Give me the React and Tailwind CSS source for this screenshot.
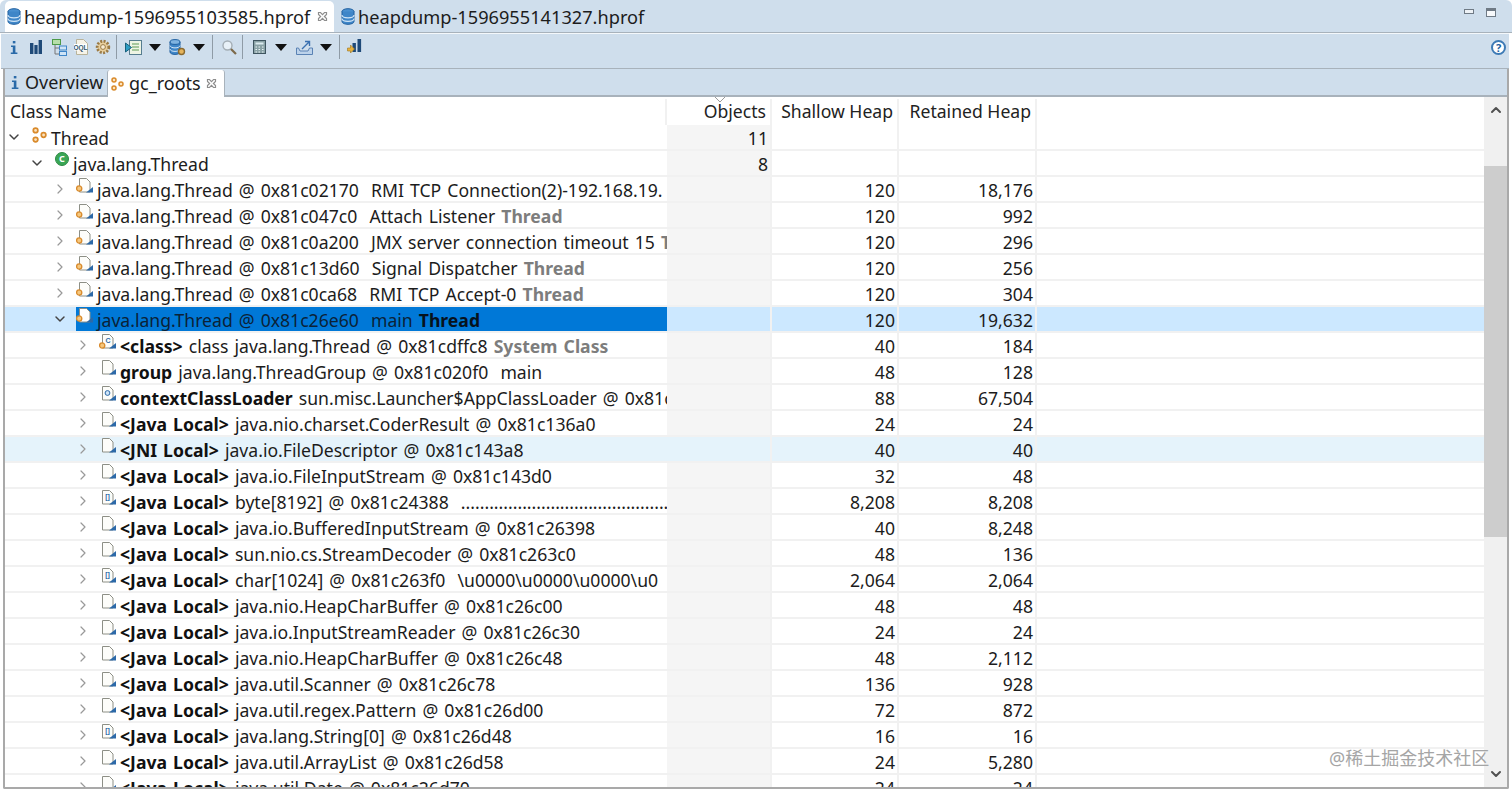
import { ChevronRight, ChevronDown, ChevronUp } from "lucide-react";

const DbIcon = () => (
  <svg width="14" height="17" viewBox="0 0 14 17" className="shrink-0">
    <ellipse cx="7" cy="3.5" rx="6" ry="2.8" fill="#4a90d0" stroke="#1f5f9f" />
    <path d="M1 3.5v10c0 1.6 2.7 2.8 6 2.8s6-1.2 6-2.8v-10" fill="#3f86c8" stroke="#1f5f9f" />
    <path d="M1 7c0 1.6 2.7 2.8 6 2.8s6-1.2 6-2.8M1 10.5c0 1.6 2.7 2.8 6 2.8s6-1.2 6-2.8" fill="none" stroke="#cfe4f6" strokeWidth="1.2" />
  </svg>
);

const InfoIcon = () => (
  <svg width="8" height="15" viewBox="0 0 8 14" className="shrink-0">
    <rect x="2.8" y="0.5" width="2.6" height="2.4" fill="#2a6aa8" />
    <path d="M1 5h4.4v7H7.4v1.5H.8V12h2V6.4H1z" fill="#2a6aa8" />
  </svg>
);

const RootsIcon = ({ size = 14 }) => (
  <svg width={size} height={size} viewBox="0 0 14 14" className="shrink-0" fill="#fbe3c0" stroke="#d98a2b" strokeWidth="1.5">
    <circle cx="4" cy="3" r="2" />
    <circle cx="11" cy="7" r="2" />
    <circle cx="4" cy="11" r="2" />
  </svg>
);

const CloseX = () => (
  <svg width="11" height="11" viewBox="0 0 11 11" className="shrink-0" fill="none" stroke="#8d8d8d" strokeWidth="1.2">
    <path d="M1.5 1.5h2L5.5 3.6 7.5 1.5h2v2L7.4 5.5l2.1 2v2h-2L5.5 7.4l-2 2.1h-2v-2l2.1-2-2.1-2z" />
  </svg>
);

const Sep = () => <div className="w-px h-[24px] bg-[#8f9ba6] mr-[5px] shrink-0" />;

const Caret = () => (
  <svg width="12" height="7" viewBox="0 0 12 7" className="shrink-0 mx-[7px]">
    <path d="M0 0h12L6 7z" fill="#111" />
  </svg>
);

const BarsIcon = () => (
  <svg width="12" height="14" viewBox="0 0 12 14" className="shrink-0">
    <rect x="0" y="3" width="3.4" height="11" fill="#1f4a78" />
    <rect x="4.4" y="5" width="3.2" height="9" fill="#1f4a78" />
    <rect x="8.6" y="0" width="3.4" height="14" fill="#1f4a78" />
  </svg>
);

const TreeIcon = () => (
  <svg width="15" height="17" viewBox="0 0 15 17" className="shrink-0" fill="none">
    <rect x="0.5" y="0.5" width="8" height="5" fill="#b7dfa9" stroke="#4d9a48" />
    <rect x="7.5" y="7" width="7" height="4" fill="#cfe4f6" stroke="#3f86c8" />
    <rect x="7.5" y="12.5" width="7" height="4" fill="#cfe4f6" stroke="#3f86c8" />
    <path d="M3 6v9h4M3 9h4" stroke="#777" />
  </svg>
);

const OqlIcon = () => (
  <svg width="14" height="16" viewBox="0 0 14 16" className="shrink-0">
    <path d="M2.5.5h7l4 4v11h-11z" fill="#f6f3e8" stroke="#b9b39a" />
    <rect x="0" y="5" width="13" height="6.5" fill="#fff" />
    <text x="6.5" y="10.8" textAnchor="middle" fontSize="6.5" fontWeight="700" fill="#33566f" fontFamily="Liberation Sans, sans-serif">OQL</text>
  </svg>
);

const GearIcon = () => (
  <svg width="16" height="16" viewBox="0 0 16 16" className="shrink-0">
    <circle cx="8" cy="8" r="5.8" fill="#e8cf9d" stroke="#9a7a45" strokeWidth="2.8" strokeDasharray="2 1.4" />
    <circle cx="8" cy="8" r="2.4" fill="#f7ecd2" stroke="#9a7a45" />
  </svg>
);

const ReportIcon = () => (
  <svg width="17" height="15" viewBox="0 0 17 15" className="shrink-0">
    <rect x="4.5" y="0.5" width="12" height="14" fill="#eef4e4" stroke="#567d8f" />
    <path d="M7 4h7M7 7h7M7 10h7" stroke="#5f9a56" />
    <path d="M0.5 3l6 4.5-6 4.5z" fill="#2c9dc4" stroke="#17607c" />
  </svg>
);

const DbGearIcon = () => (
  <svg width="17" height="17" viewBox="0 0 17 17" className="shrink-0">
    <path d="M1 3v10c0 1.4 2.2 2.4 5 2.4s5-1 5-2.4V3z" fill="#3f86c8" stroke="#1f5f9f" />
    <ellipse cx="6" cy="3" rx="5" ry="2.4" fill="#7fb3e0" stroke="#1f5f9f" />
    <path d="M1 6.5c0 1.4 2.2 2.4 5 2.4s5-1 5-2.4M1 10c0 1.4 2.2 2.4 5 2.4s5-1 5-2.4" fill="none" stroke="#d5e7f6" />
    <circle cx="12.5" cy="12.5" r="3" fill="#e6b45c" stroke="#8a6a30" strokeWidth="1.4" />
  </svg>
);

const SearchIcon = () => (
  <svg width="15" height="15" viewBox="0 0 15 15" className="shrink-0">
    <circle cx="5.5" cy="5.5" r="4.5" fill="#e8f1f8" stroke="#a4aeb5" strokeWidth="1.4" />
    <path d="M9 9l5 5" stroke="#7d6a4a" strokeWidth="2.2" />
  </svg>
);

const CalcIcon = () => (
  <svg width="13" height="14" viewBox="0 0 13 14" className="shrink-0">
    <rect x="0.5" y="0.5" width="12" height="13" fill="#8aa2a6" stroke="#3f5560" />
    <rect x="2.5" y="2.5" width="8" height="2" fill="#dcebf0" />
    <path d="M2.5 7h1.5M5.5 7H7M9 7h1.5M2.5 9.5h1.5M5.5 9.5H7M9 9.5h1.5M2.5 12h1.5M5.5 12H7M9 12h1.5" stroke="#e9f3f6" />
  </svg>
);

const ExportIcon = () => (
  <svg width="17" height="15" viewBox="0 0 17 15" className="shrink-0" fill="none">
    <path d="M.5 8v6.5h16V8h-3l-1.5 3H4L2.5 8z" fill="#bcd2ea" stroke="#5a82b4" />
    <path d="M6 9l7-7M9 1.5h4.5V6" stroke="#3a70b0" strokeWidth="1.4" />
  </svg>
);

const CompareIcon = () => (
  <svg width="15" height="16" viewBox="0 0 15 16" className="shrink-0">
    <rect x="5.5" y="4" width="3.4" height="9" fill="#1f4a78" />
    <rect x="10.5" y="0" width="3.6" height="13" fill="#1f4a78" />
    <path d="M0.5 9h3V6l4 4-4 4v-2h-3z" fill="#e8b23e" stroke="#9a7420" strokeWidth=".6" />
  </svg>
);

// the small object icons in front of each tree row
const ObjIcon = ({ kind, selected }) => (
  <svg width="18" height="17" viewBox="0 0 18 17" className="shrink-0 -mt-[6px]">
    <path d="M3.5 .5h7l3.5 3.5v10H3.5z" fill={selected ? "#fff" : "#fdfdfa"} stroke="#8d8f86" />
    <path d="M10 14.5h7V9z" fill="#2c69a8" />
    {kind === "gc" && <circle cx="3.2" cy="10.5" r="2.6" fill="#f5c77e" stroke="#d98a2b" strokeWidth="1.3" />}
    {kind === "class" && <circle cx="3.2" cy="11.5" r="2.6" fill="#f5c77e" stroke="#d98a2b" strokeWidth="1.3" />}
    {kind === "class" && <text x="9" y="9" textAnchor="middle" fontSize="7" fontWeight="700" fill="#2c69a8" fontFamily="Liberation Sans, sans-serif">C</text>}
    {kind === "loader" && <circle cx="8.5" cy="7" r="2.4" fill="#cfe4f6" stroke="#2c69a8" />}
    {kind === "array" && <text x="8.5" y="9" textAnchor="middle" fontSize="7" fontWeight="700" fill="#2c69a8" fontFamily="Liberation Sans, sans-serif">[]</text>}
  </svg>
);

const rows = [
  { level: 0, open: true, root: true, name: "Thread", objects: "11" },
  { level: 1, open: true, cls: true, name: "java.lang.Thread", objects: "8" },
  { level: 2, icon: "gc", name: "java.lang.Thread @ 0x81c02170  RMI TCP Connection(2)-192.168.19.", shallow: "120", retained: "18,176" },
  { level: 2, icon: "gc", name: "java.lang.Thread @ 0x81c047c0  Attach Listener ", tail: "Thread", shallow: "120", retained: "992" },
  { level: 2, icon: "gc", name: "java.lang.Thread @ 0x81c0a200  JMX server connection timeout 15 ", tail: "Thread", shallow: "120", retained: "296" },
  { level: 2, icon: "gc", name: "java.lang.Thread @ 0x81c13d60  Signal Dispatcher ", tail: "Thread", shallow: "120", retained: "256" },
  { level: 2, icon: "gc", name: "java.lang.Thread @ 0x81c0ca68  RMI TCP Accept-0 ", tail: "Thread", shallow: "120", retained: "304" },
  { level: 2, open: true, selected: true, icon: "gc", name: "java.lang.Thread @ 0x81c26e60  main ", tail: "Thread", shallow: "120", retained: "19,632" },
  { level: 3, icon: "class", label: "<class>", name: "class java.lang.Thread @ 0x81cdffc8 ", tail: "System Class", shallow: "40", retained: "184" },
  { level: 3, label: "group", name: "java.lang.ThreadGroup @ 0x81c020f0  main", shallow: "48", retained: "128" },
  { level: 3, icon: "loader", label: "contextClassLoader", name: "sun.misc.Launcher$AppClassLoader @ 0x81c0", shallow: "88", retained: "67,504" },
  { level: 3, label: "<Java Local>", name: "java.nio.charset.CoderResult @ 0x81c136a0", shallow: "24", retained: "24" },
  { level: 3, hover: true, label: "<JNI Local>", name: "java.io.FileDescriptor @ 0x81c143a8", shallow: "40", retained: "40" },
  { level: 3, label: "<Java Local>", name: "java.io.FileInputStream @ 0x81c143d0", shallow: "32", retained: "48" },
  { level: 3, icon: "array", label: "<Java Local>", name: "byte[8192] @ 0x81c24388  ..............................................................", shallow: "8,208", retained: "8,208" },
  { level: 3, label: "<Java Local>", name: "java.io.BufferedInputStream @ 0x81c26398", shallow: "40", retained: "8,248" },
  { level: 3, label: "<Java Local>", name: "sun.nio.cs.StreamDecoder @ 0x81c263c0", shallow: "48", retained: "136" },
  { level: 3, icon: "array", label: "<Java Local>", name: "char[1024] @ 0x81c263f0  \\u0000\\u0000\\u0000\\u0", shallow: "2,064", retained: "2,064" },
  { level: 3, label: "<Java Local>", name: "java.nio.HeapCharBuffer @ 0x81c26c00", shallow: "48", retained: "48" },
  { level: 3, label: "<Java Local>", name: "java.io.InputStreamReader @ 0x81c26c30", shallow: "24", retained: "24" },
  { level: 3, label: "<Java Local>", name: "java.nio.HeapCharBuffer @ 0x81c26c48", shallow: "48", retained: "2,112" },
  { level: 3, label: "<Java Local>", name: "java.util.Scanner @ 0x81c26c78", shallow: "136", retained: "928" },
  { level: 3, label: "<Java Local>", name: "java.util.regex.Pattern @ 0x81c26d00", shallow: "72", retained: "872" },
  { level: 3, icon: "array", label: "<Java Local>", name: "java.lang.String[0] @ 0x81c26d48", shallow: "16", retained: "16" },
  { level: 3, label: "<Java Local>", name: "java.util.ArrayList @ 0x81c26d58", shallow: "24", retained: "5,280" },
  { level: 3, label: "<Java Local>", name: "java.util.Date @ 0x81c26d70", shallow: "24", retained: "24" },
];

const indentClass = ["w-[1px]", "w-[24px]", "w-[47px]", "w-[70px]"];

const Row = ({ row }) => {
  const rowBg = row.selected ? "bg-[#cce8ff]" : row.hover ? "bg-[#e5f3fb]" : "";
  const Chevron = row.open ? ChevronDown : ChevronRight;
  return (
    <div className={`flex h-[26px] shrink-0 border-b-2 border-[#f1f1f1] ${rowBg}`}>
      <div className="w-[662px] shrink-0 flex items-center overflow-hidden">
        <div className={`${indentClass[row.level]} shrink-0`} />
        <Chevron size={16} strokeWidth={row.open ? 2.2 : 1.8} className={`shrink-0 ${row.open ? "text-[#444]" : "text-[#999]"}`} />
        <div className="w-[8px] shrink-0" />
        <div className={`flex items-center h-full flex-1 min-w-0 overflow-hidden ${row.selected ? "bg-[#0078d7]" : ""}`}>
          {row.root && <span className="ml-[1px] -mt-[4px]"><RootsIcon size={16} /></span>}
          {row.cls && (
            <span className="ml-[2px] w-[14px] h-[14px] rounded-full bg-[#3aa655] border border-[#2d8a45] text-white text-[9px] leading-[12px] text-center font-bold shrink-0 -mt-[8px]">C</span>
          )}
          {!row.root && !row.cls && <ObjIcon kind={row.icon} selected={row.selected} />}
          <span className={`whitespace-pre text-[17.6px] leading-[24px] mt-[1px] [word-spacing:1.5px] ${row.root || row.cls ? "pl-[4px]" : "pl-[3px]"} ${row.selected ? "text-[#0b2237]" : "text-[#1c1c1c]"}`}>
            {row.label && <b className="font-bold text-[#111]">{row.label} </b>}
            {row.name}
            {row.tail && <b className={`font-bold ${row.selected ? "text-[#06121d]" : "text-[#7d7d7d]"}`}>{row.tail}</b>}
          </span>
        </div>
      </div>
      <div className={`w-[105px] shrink-0 pr-[2px] text-right text-[17.6px] leading-[26px] border-r-2 border-[#f1f1f1] ${rowBg || "bg-[#f5f5f5]"}`}>{row.objects}</div>
      <div className="w-[127px] shrink-0 pr-[2px] text-right text-[17.6px] leading-[26px] border-r-2 border-[#f1f1f1]">{row.shallow}</div>
      <div className="w-[138px] shrink-0 pr-[2px] text-right text-[17.6px] leading-[26px] border-r-2 border-[#f1f1f1]">{row.retained}</div>
      <div className="flex-1" />
    </div>
  );
};

export default function App() {
  return (
    <div className="relative w-[1512px] h-[791px] overflow-hidden bg-white text-[#1c1c1c] font-['Noto_Sans','Open_Sans',sans-serif]">
      {/* editor tabs */}
      <div className="h-[32px] flex items-end bg-[#cfdeec] pl-[5px] rounded-t-[6px]">
        <div className="h-[31px] w-[329px] bg-white rounded-t-[5px] flex items-center pl-[2px] pr-[6px] gap-[3px] text-[18.2px] leading-[32px]">
          <DbIcon />
          <span className="flex-1 whitespace-nowrap">heapdump-1596955103585.hprof</span>
          <CloseX />
        </div>
        <div className="h-[31px] flex items-center pl-[7px] gap-[3px] text-[18.2px] leading-[32px]">
          <DbIcon />
          <span className="whitespace-nowrap">heapdump-1596955141327.hprof</span>
        </div>
        <div className="flex-1" />
        <div className="h-full flex items-center gap-[12px] pr-[16px] pb-[10px]">
          <div className="w-[10px] h-[5px] bg-[#eef2f6] border border-[#6f7a85]" />
          <div className="w-[10px] h-[9px] mt-[3px] bg-[#f7f9fb] border border-[#6f7a85] border-t-[3px]" />
        </div>
      </div>
      <div className="h-[1px] bg-[#a8b2bb]" />

      {/* toolbar */}
      <div className="h-[35px] ml-[1px] mr-[3px] bg-[#cfdeec] border-t border-[#f4f8fb] flex items-center pl-[9px] pb-[8px]">
        <div className="w-[20px]"><InfoIcon /></div>
        <div className="w-[22px]"><BarsIcon /></div>
        <div className="w-[22px]"><TreeIcon /></div>
        <div className="w-[21px]"><OqlIcon /></div>
        <div className="w-[21px]"><GearIcon /></div>
        <Sep />
        <span className="ml-[3px]"><ReportIcon /></span>
        <Caret />
        <span className="ml-[1px]"><DbGearIcon /></span>
        <Caret />
        <Sep />
        <div className="w-[20px] ml-[4px]"><SearchIcon /></div>
        <Sep />
        <div className="w-[15px] ml-[5px]"><CalcIcon /></div>
        <Caret />
        <span className="ml-[2px]"><ExportIcon /></span>
        <Caret />
        <Sep />
        <span className="ml-[2px]"><CompareIcon /></span>
        <div className="flex-1" />
        <span className="w-[15px] h-[15px] mr-[3px] rounded-full bg-white border-2 border-[#3d7ab5] text-[#1f5f9f] text-[11px] leading-[11px] text-center font-bold">?</span>
      </div>
      <div className="h-[1px] bg-[#a8b2bb] ml-[1px] mr-[3px]" />

      {/* results panel, framed down to the bottom */}
      <div className="h-[720px] ml-[3px] mr-[3px] border-x-2 border-b-2 border-[#a9a9a9] rounded-b-[2px] flex flex-col overflow-hidden">
        <div className="h-[28px] shrink-0 flex items-end bg-[#cfdeec] border-b-2 border-[#a8b2bb]">
          <div className="h-[26px] w-[102px] flex items-center pl-[6px] gap-[6px] text-[18px]">
            <InfoIcon />
            <span>Overview</span>
          </div>
          <div className="h-[27px] w-[118px] -mb-[2px] bg-white rounded-t-[3px] border-x border-[#a8b2bb] flex items-center pl-[2px] gap-[5px] text-[18px]">
            <RootsIcon size={14} />
            <span className="flex-1">gc_roots</span>
            <span className="pr-[7px]"><CloseX /></span>
          </div>
        </div>

        <div className="flex-1 min-h-0 flex">
          <div className="flex-1 min-w-0 flex flex-col overflow-hidden">
            {/* column headers */}
            <div className="flex h-[28px] shrink-0 pt-[2px] text-[17.6px] leading-[24px] text-[#222]">
              <div className="w-[662px] shrink-0 pl-[5px] border-r-2 border-[#f1f1f1]">Class Name</div>
              <div className="relative w-[105px] shrink-0 pr-[4px] text-right border-r-2 border-[#f1f1f1]">
                Objects
                <svg width="12" height="6" viewBox="0 0 12 6" className="absolute left-[47px] -top-[2px]" fill="none" stroke="#9a9a9a">
                  <path d="M1 0l5 5 5-5" />
                </svg>
              </div>
              <div className="w-[127px] shrink-0 pr-[4px] text-right border-r-2 border-[#f1f1f1]">Shallow Heap</div>
              <div className="w-[138px] shrink-0 pr-[4px] text-right border-r-2 border-[#f1f1f1]">Retained Heap</div>
            </div>
            {rows.map((row) => (
              <Row key={row.name} row={row} />
            ))}
          </div>

          {/* scrollbar */}
          <div className="w-[23px] shrink-0 bg-[#f0f0f0] flex flex-col items-center">
            <div className="h-[26px] shrink-0 flex items-center justify-center">
              <ChevronUp size={16} strokeWidth={3} className="text-[#505050]" />
            </div>
            <div className="h-[43px] shrink-0" />
            <div className="h-[371px] w-full shrink-0 bg-[#cdcdcd]" />
            <div className="flex-1" />
            <div className="h-[26px] shrink-0 flex items-center justify-center">
              <ChevronDown size={16} strokeWidth={3} className="text-[#505050]" />
            </div>
          </div>
        </div>
      </div>

      {/* watermark */}
      <div className="absolute left-[1329px] top-[746px] text-[18px] leading-[24px] text-[#a5a5a5] whitespace-nowrap font-['Noto_Sans','Noto_Sans_CJK_SC',sans-serif]">
        @稀土掘金技术社区
      </div>
    </div>
  );
}
